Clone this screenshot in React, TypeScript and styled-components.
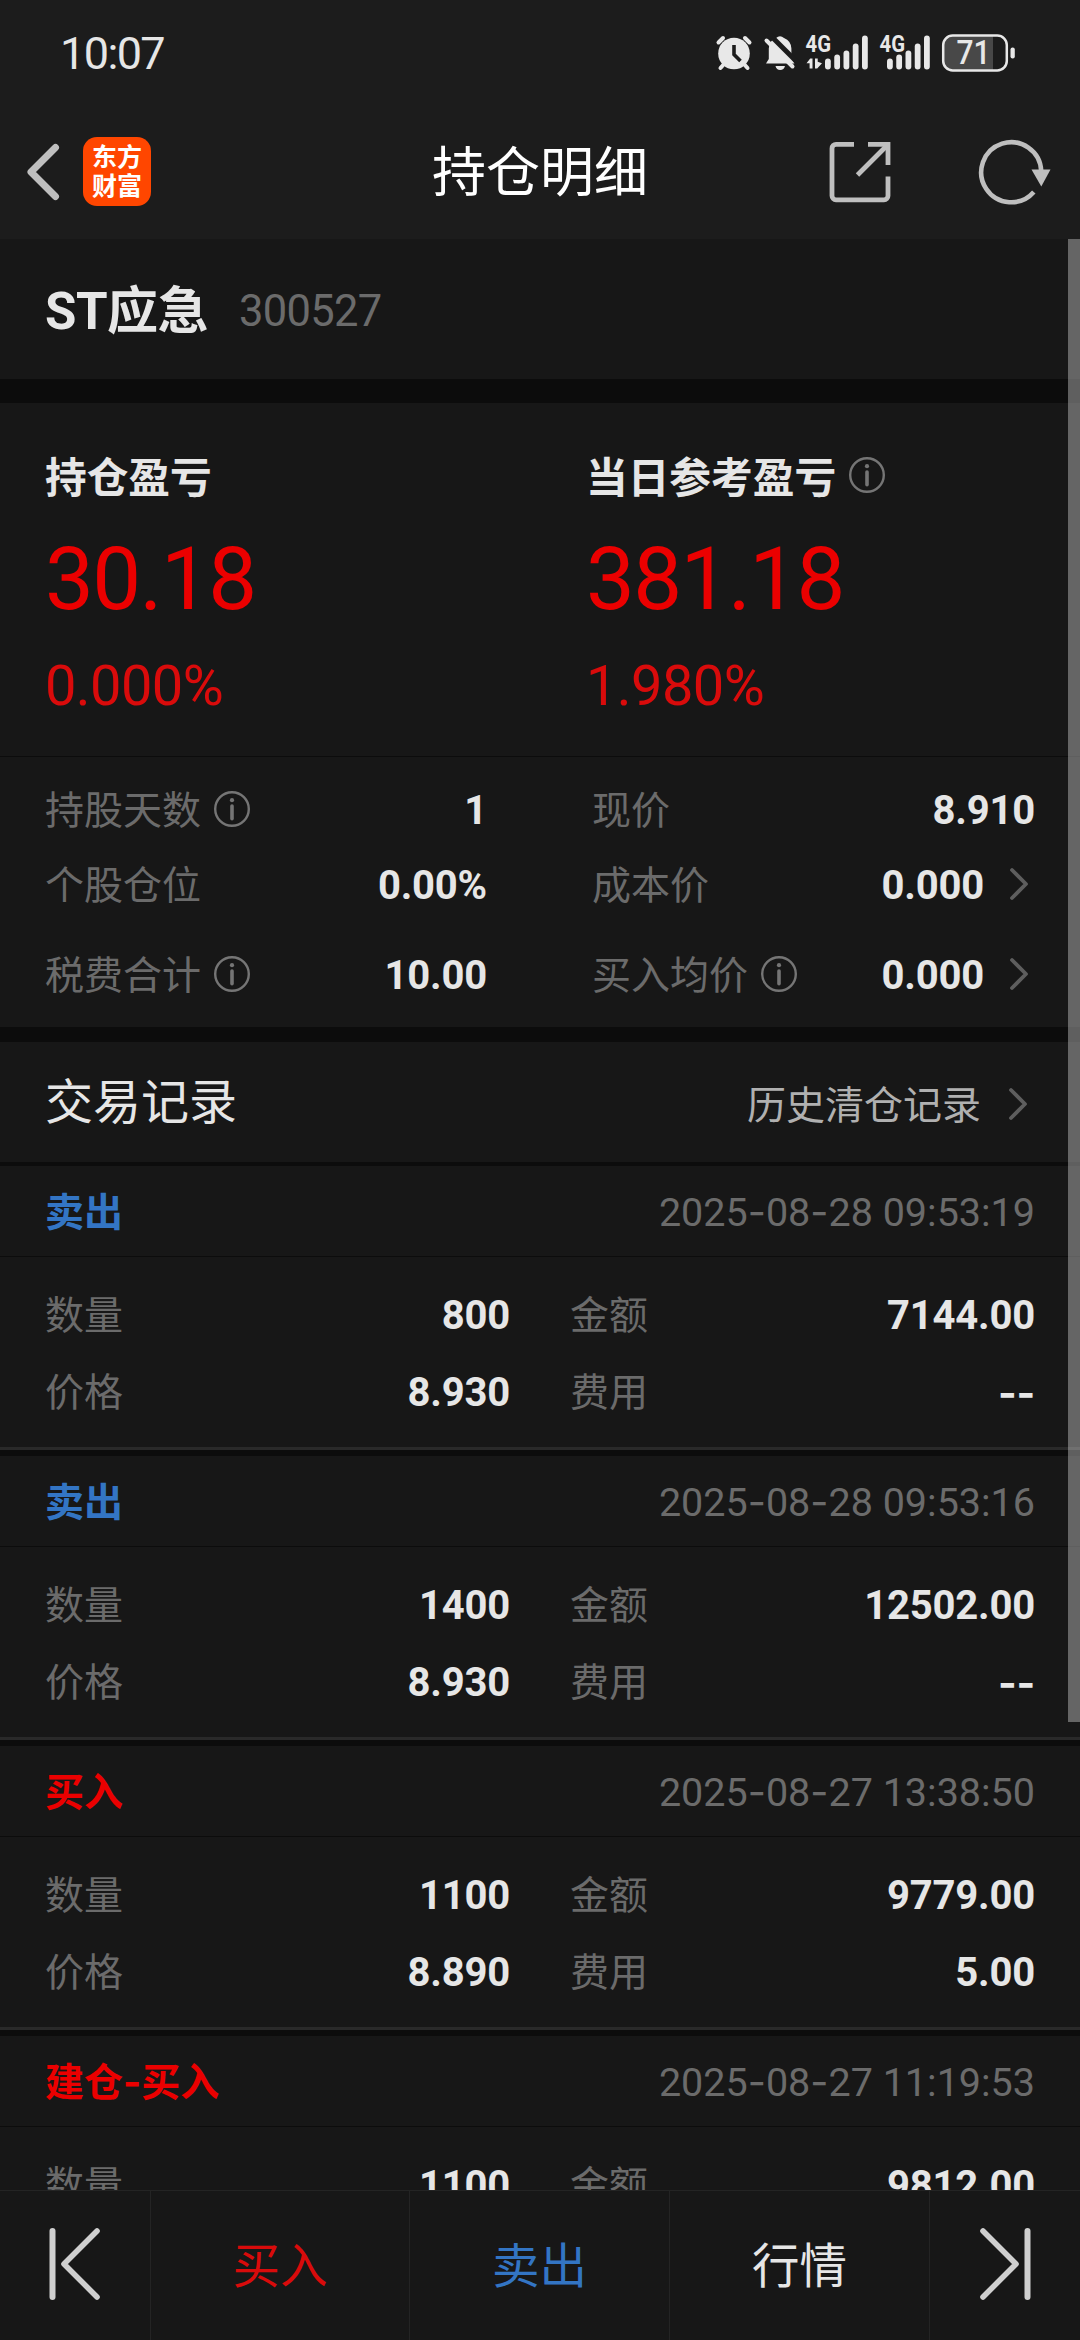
import React from "react";
import styled, { createGlobalStyle } from "styled-components";

const GlobalStyle = createGlobalStyle`
  * { box-sizing: border-box; }
  html, body { margin: 0; padding: 0; background: #161616; }
  body {
    font-family: Roboto, "Noto Sans CJK SC", sans-serif;
    color: #e6e6e6;
    overflow: hidden;
  }
  svg { display: block; flex: none; overflow: visible; }
`;

const color = {
  header: "#1c1c1c",
  panel: "#171717",
  gap: "#0c0c0c",
  rule: "#292929",
  text: "#e6e6e6",
  muted: "#6b6b6b",
  icon: "#bfbfbf",
  red: "#eb0000",
  softRed: "#d90b0b",
  blue: "#3375c4",
};

const Screen = styled.div`
  width: 1080px;
  height: 2340px;
  display: flex;
  flex-direction: column;
  overflow: hidden;
  background: ${color.panel};
`;

const StatusBar = styled.div`
  height: 106px;
  flex: none;
  display: flex;
  align-items: center;
  justify-content: space-between;
  padding: 0 65px 0 60px;
  background: ${color.header};
`;

const Clock = styled.span`
  font-size: 45px;
  line-height: 60px;
  letter-spacing: -1.6px;
  padding-top: 2px;
`;

const StatusIcons = styled.div`
  display: flex;
  align-items: center;
`;

const StatusSlot = styled.span<{ $gap?: number }>`
  display: flex;
  margin-left: ${(p) => p.$gap ?? 12}px;
`;

const NavBar = styled.header`
  height: 133px;
  flex: none;
  display: grid;
  grid-template-columns: 1fr auto 1fr;
  align-items: center;
  padding: 0 29px 2px 26px;
  background: ${color.header};
`;

const NavLeft = styled.div`
  display: flex;
  align-items: center;
  gap: 23px;
`;

const NavRight = styled.div`
  display: flex;
  align-items: center;
  justify-content: flex-end;
  gap: 88px;
`;

const AppLogo = styled.div`
  width: 68px;
  height: 69px;
  padding-bottom: 3px;
  border-radius: 14px;
  background: #ff4600;
  color: #fff;
  display: flex;
  flex-direction: column;
  align-items: center;
  justify-content: center;
  font: 700 25px/29px "Noto Sans CJK SC", sans-serif;
`;

const Title = styled.h1`
  margin: 0;
  padding: 5px 0 0 3px;
  font-size: 54px;
  line-height: 70px;
  font-weight: 400;
  color: #fff;
`;

const Content = styled.main`
  position: relative;
  flex: 1;
  min-height: 0;
  overflow: hidden;
`;

const ScrollThumb = styled.div`
  position: absolute;
  top: 0;
  right: 0;
  width: 12px;
  height: 1483px;
  background: rgba(219, 219, 219, 0.4);
`;

const Gap = styled.div<{ $h: number }>`
  height: ${(p) => p.$h}px;
  background: ${color.gap};
`;

const StockRow = styled.section`
  height: 140px;
  display: flex;
  align-items: center;
  padding: 5px 45px 0;
  gap: 31px;
`;

const StockName = styled.span`
  font-size: 51px;
  line-height: 70px;
  letter-spacing: -0.5px;
  font-weight: 700;
`;

const StockCode = styled.span`
  font-size: 43.5px;
  line-height: 60px;
  letter-spacing: -0.7px;
  color: ${color.muted};
`;

const Profit = styled.section`
  height: 354px;
  display: grid;
  grid-template-columns: 541px 1fr;
  padding: 41px 0 0 45px;
  border-bottom: 1px solid ${color.gap};
`;

const ProfitLabel = styled.div`
  height: 62px;
  display: flex;
  align-items: center;
  gap: 13px;
  font-size: 41.7px;
  font-weight: 700;
`;

const ProfitAmount = styled.div`
  font-size: 87px;
  line-height: 100px;
  letter-spacing: -1.6px;
  margin-top: 23px;
  color: ${color.red};
`;

const ProfitRate = styled.div`
  font-size: 56px;
  line-height: 70px;
  letter-spacing: -0.6px;
  margin-top: 22px;
  color: ${color.softRed};
`;

const Details = styled.section`
  height: 270px;
  display: grid;
  grid-template-columns: 442px 443px;
  column-gap: 105px;
  grid-template-rows: 75px 75px 105px;
  padding: 15px 0 0 45px;
`;

const Pair = styled.div`
  display: flex;
  align-items: center;
  justify-content: space-between;
`;

const Label = styled.span`
  display: flex;
  align-items: center;
  gap: 13px;
  padding-top: 3px;
  font-size: 39px;
  line-height: 60px;
  color: ${color.muted};
  svg {
    margin-top: -5px;
  }
`;

const Value = styled.span<{ $chevron?: boolean }>`
  display: flex;
  align-items: center;
  gap: 25px;
  padding-top: 3px;
  padding-right: ${(p) => (p.$chevron ? 6 : 0)}px;
  font-size: 40px;
  line-height: 60px;
  letter-spacing: -0.2px;
  font-weight: 700;
  svg {
    margin-top: -4px;
  }
`;

const WideHyphen = styled.span`
  font-family: Inter, sans-serif;
`;

const SectionHead = styled.section`
  height: 120px;
  display: flex;
  align-items: center;
  justify-content: space-between;
  padding: 2px 52px 0 45px;
`;

const SectionTitle = styled.h2`
  margin: 0;
  font-size: 48px;
  line-height: 64px;
  font-weight: 400;
`;

const HistoryLink = styled.span`
  display: flex;
  align-items: center;
  gap: 27px;
  padding-top: 6px;
  font-size: 39px;
  line-height: 60px;
  color: #b0b0b0;
  svg {
    margin-top: -5px;
  }
`;

const Record = styled.article`
  height: 290px;
`;

const RecordHead = styled.div`
  height: 91px;
  display: flex;
  align-items: center;
  justify-content: space-between;
  padding: 3px 45px 0;
  border-bottom: 1px solid ${color.gap};
`;

const Side = styled.span<{ $buy: boolean }>`
  font-size: 39px;
  line-height: 60px;
  font-weight: 700;
  color: ${(p) => (p.$buy ? color.red : color.blue)};
`;

const Time = styled.span`
  font-size: 39.5px;
  line-height: 60px;
  color: ${color.muted};
`;

const RecordBody = styled.div`
  height: 193px;
  display: grid;
  grid-template-columns: 465px 465px;
  column-gap: 60px;
  grid-template-rows: 77px 77px;
  padding: 19px 0 0 45px;
  border-bottom: 3px solid ${color.rule};
`;

const BottomBar = styled.footer`
  height: 150px;
  flex: none;
  display: grid;
  grid-template-columns: 151px 259px 260px 260px 150px;
  border-top: 1px solid #242424;
  background: ${color.panel};
`;

const BarItem = styled.div<{ $tone?: string }>`
  display: flex;
  align-items: center;
  justify-content: center;
  padding-top: 3px;
  font-size: 47.5px;
  line-height: 64px;
  color: ${(p) => p.$tone ?? color.text};
  &:not(:last-child) {
    border-right: 1px solid #242424;
  }
  svg {
    margin-top: -7px;
  }
`;

const InfoIcon = () => (
  <svg width="36" height="36" viewBox="0 0 36 36" fill="none">
    <circle cx="18" cy="18" r="16.8" stroke="#757575" strokeWidth="2.4" />
    <circle cx="18" cy="9.2" r="2.1" fill="#757575" />
    <path d="M18 15v12.7" stroke="#757575" strokeWidth="3.6" strokeLinecap="round" />
  </svg>
);

const ChevronRight = () => (
  <svg width="20" height="34" viewBox="0 0 20 34" fill="none">
    <path d="M3 3l14 14L3 31" stroke="#5e5e5e" strokeWidth="3.8" strokeLinecap="round" strokeLinejoin="round" />
  </svg>
);

const BackIcon = () => (
  <svg width="34" height="58" viewBox="0 0 34 58" fill="none">
    <path d="M29.5 4.5L5 29l24.500 24.500" stroke={color.icon} strokeWidth="7" strokeLinecap="round" strokeLinejoin="round" />
  </svg>
);

const ShareIcon = () => (
  <svg width="62" height="62" viewBox="0 0 62 62" fill="none" stroke={color.icon} strokeWidth="4.8">
    <path d="M25 3.400H7a4 4 0 0 0-4 4V54.800a4 4 0 0 0 4 4H55a4 4 0 0 0 4-4V35.500" />
    <path d="M39 3.400H59V24" />
    <path d="M58 4.500L28.500 34" />
  </svg>
);

const RefreshIcon = () => (
  <svg width="72" height="66" viewBox="0 0 72 66" fill="none">
    <path d="M54.800 53A30 30 0 1 1 62.200 32" stroke={color.icon} strokeWidth="4.600" />
    <path d="M52.500 30.500H71.500L62.300 47.500z" fill={color.icon} />
  </svg>
);

const AlarmIcon = () => (
  <svg width="36" height="36" viewBox="0 0 36 36" fill="none">
    <circle cx="18" cy="18.500" r="15.800" fill="#e8e8e8" />
    <path d="M2.500 7.500L7 3M33.500 7.500L29 3" stroke="#e8e8e8" strokeWidth="4" strokeLinecap="round" />
    <path d="M8 29l-3.500 4M28 29l3.500 4" stroke="#e8e8e8" strokeWidth="4" strokeLinecap="round" />
    <path d="M18 10v9.500l6.500 6.500" stroke={color.header} strokeWidth="3.600" />
  </svg>
);

const MutedIcon = () => (
  <svg width="32" height="36" viewBox="0 0 32 36" fill="none">
    <path d="M2 28.500L4.800 24V13.500Q5.200 5.500 12 3Q16 -0.500 20 3Q27.200 6 27.400 13.500V23.500L30.500 28.500z" fill="#e8e8e8" />
    <path d="M11.500 31h9.500q-1 4-4.800 4t-4.700-4z" fill="#e8e8e8" />
    <path d="M6 0L34 28" stroke={color.header} strokeWidth="5" />
    <path d="M0 0H10L4 9L0 18z" fill={color.header} />
    <path d="M2.500 5.500L28.500 31.500" stroke="#e8e8e8" strokeWidth="4" strokeLinecap="round" />
  </svg>
);

const barTops = [23.5, 19.5, 15.5, 8.5, 0.5];

const Signal = ({ data }: { data?: boolean }) => (
  <svg width={data ? 62 : 50} height="36" viewBox={`0 0 ${data ? 62 : 50} 36`}>
    <text x="-0.5" y="16.800" fontSize="23" fontWeight="700" fontFamily="Roboto, sans-serif" textLength="25.500" lengthAdjust="spacingAndGlyphs" fill="#e8e8e8">
      4G
    </text>
    {data && (
      <path
        d="M0.500 28.300L4.200 23.500H6.500V33.500H3.600V28.300zM9 23.500H11.700V26.800L16 28.200L11.200 33.500H9z"
        fill="#e8e8e8"
      />
    )}
    {barTops.map((y, i) => (
      <rect key={i} x={(data ? 19 : 7) + i * 9.25} y={y} width="5.800" height={34.5 - y} rx="2.900" fill="#e8e8e8" />
    ))}
  </svg>
);

const Battery = () => (
  <svg width="73" height="38" viewBox="0 0 73 38">
    <path d="M11 2H51V36H11Q2 36 2 27V11Q2 2 11 2z" fill="#484848" />
    <rect x="1.200" y="1.500" width="63.600" height="35" rx="9.500" fill="none" stroke="#e8e8e8" strokeWidth="2.500" />
    <rect x="68.500" y="13.500" width="4.300" height="11" rx="2" fill="#e8e8e8" />
    <text x="31.500" y="29.800" fontSize="32.500" fontFamily="Roboto, sans-serif" fontWeight="500" textAnchor="middle" textLength="34" lengthAdjust="spacingAndGlyphs" fill="#e8e8e8">
      71
    </text>
  </svg>
);

const FirstIcon = () => (
  <svg width="54" height="74" viewBox="0 0 54 74" fill="none" stroke="#cfcfcf" strokeWidth="5.600" strokeLinecap="round" strokeLinejoin="round">
    <path d="M4.500 4V70" strokeWidth="6" />
    <path d="M49 4L16 37L49 70" />
  </svg>
);

const LastIcon = () => (
  <svg width="54" height="74" viewBox="0 0 54 74" fill="none" stroke="#cfcfcf" strokeWidth="5.600" strokeLinecap="round" strokeLinejoin="round">
    <path d="M49.500 4V70" strokeWidth="6" />
    <path d="M5 4L38 37L5 70" />
  </svg>
);

type Detail = { label: string; value: string; info?: boolean; link?: boolean };

const details: Detail[] = [
  { label: "持股天数", value: "1", info: true },
  { label: "现价", value: "8.910" },
  { label: "个股仓位", value: "0.00%" },
  { label: "成本价", value: "0.000", link: true },
  { label: "税费合计", value: "10.00", info: true },
  { label: "买入均价", value: "0.000", info: true, link: true },
];

type TradeRecord = {
  side: string;
  buy: boolean;
  time: string;
  qty: string;
  amount: string;
  price?: string;
  fee?: string;
};

const records: TradeRecord[] = [
  { side: "卖出", buy: false, time: "2025-08-28 09:53:19", qty: "800", amount: "7144.00", price: "8.930", fee: "--" },
  { side: "卖出", buy: false, time: "2025-08-28 09:53:16", qty: "1400", amount: "12502.00", price: "8.930", fee: "--" },
  { side: "买入", buy: true, time: "2025-08-27 13:38:50", qty: "1100", amount: "9779.00", price: "8.890", fee: "5.00" },
  { side: "建仓-买入", buy: true, time: "2025-08-27 11:19:53", qty: "1100", amount: "9812.00" },
];

// Roboto's hyphen is narrow, so hyphens are set in a wider face.
const Hyphenated = ({ text }: { text: string }) => (
  <span>
    {text.split(/(-+)/).map((part, i) => (part.startsWith("-") ? <WideHyphen key={i}>{part}</WideHyphen> : part))}
  </span>
);

const Field = ({ label, value, info, link }: Detail) => (
  <Pair>
    <Label>
      {label}
      {info && <InfoIcon />}
    </Label>
    <Value $chevron={link}>
      <Hyphenated text={value} />
      {link && <ChevronRight />}
    </Value>
  </Pair>
);

export default function App() {
  return (
    <Screen>
      <GlobalStyle />
      <StatusBar>
        <Clock>10:07</Clock>
        <StatusIcons>
          <AlarmIcon />
          <StatusSlot><MutedIcon /></StatusSlot>
          <StatusSlot $gap={10}><Signal data /></StatusSlot>
          <StatusSlot><Signal /></StatusSlot>
          <StatusSlot><Battery /></StatusSlot>
        </StatusIcons>
      </StatusBar>
      <NavBar>
        <NavLeft>
          <BackIcon />
          <AppLogo>
            <span>东方</span>
            <span>财富</span>
          </AppLogo>
        </NavLeft>
        <Title>持仓明细</Title>
        <NavRight>
          <ShareIcon />
          <RefreshIcon />
        </NavRight>
      </NavBar>
      <Content>
        <StockRow>
          <StockName>ST应急</StockName>
          <StockCode>300527</StockCode>
        </StockRow>
        <Gap $h={24} />
        <Profit>
          <div>
            <ProfitLabel>持仓盈亏</ProfitLabel>
            <ProfitAmount>30.18</ProfitAmount>
            <ProfitRate>0.000%</ProfitRate>
          </div>
          <div>
            <ProfitLabel>当日参考盈亏 <InfoIcon /></ProfitLabel>
            <ProfitAmount>381.18</ProfitAmount>
            <ProfitRate>1.980%</ProfitRate>
          </div>
        </Profit>
        <Details>
          {details.map((d) => (
            <Field key={d.label} {...d} />
          ))}
        </Details>
        <Gap $h={15} />
        <SectionHead>
          <SectionTitle>交易记录</SectionTitle>
          <HistoryLink>
            历史清仓记录
            <ChevronRight />
          </HistoryLink>
        </SectionHead>
        <Gap $h={4} />
        {records.map((r) => (
          <Record key={r.time}>
            <RecordHead>
              <Side $buy={r.buy}><Hyphenated text={r.side} /></Side>
              <Time><Hyphenated text={r.time} /></Time>
            </RecordHead>
            <RecordBody>
              <Field label="数量" value={r.qty} />
              <Field label="金额" value={r.amount} />
              {r.price && <Field label="价格" value={r.price} />}
              {r.fee && <Field label="费用" value={r.fee} />}
            </RecordBody>
            <Gap $h={6} />
          </Record>
        ))}
        <ScrollThumb />
      </Content>
      <BottomBar>
        <BarItem><FirstIcon /></BarItem>
        <BarItem $tone={color.softRed}>买入</BarItem>
        <BarItem $tone={color.blue}>卖出</BarItem>
        <BarItem>行情</BarItem>
        <BarItem><LastIcon /></BarItem>
      </BottomBar>
    </Screen>
  );
}
